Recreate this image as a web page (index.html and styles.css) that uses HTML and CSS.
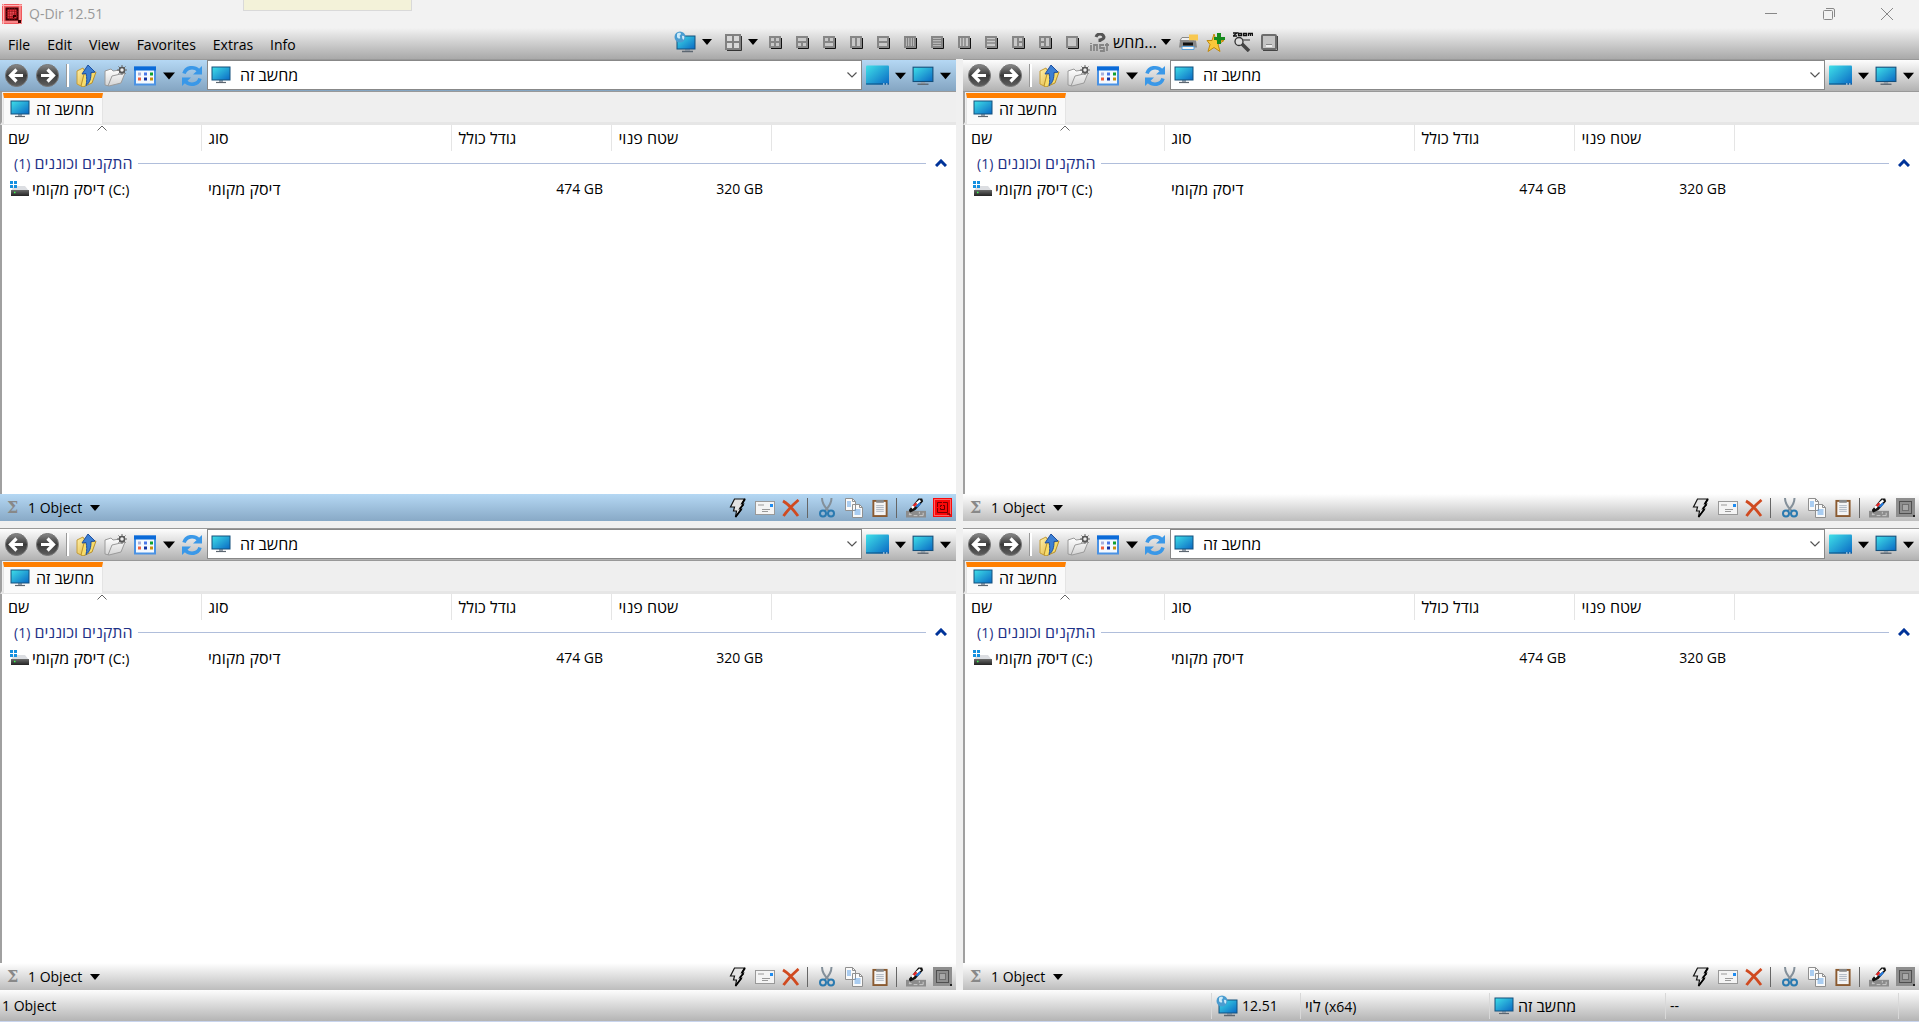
FILE: index.html
```html
<!DOCTYPE html>
<html lang="en">
<head>
<meta charset="utf-8">
<title>Q-Dir 12.51</title>
<link rel="stylesheet" href="styles.css">
</head>
<body>
<svg class="sprite" aria-hidden="true">
  <defs>
    <linearGradient id="screen" x1="0" y1="0" x2="1" y2="1"><stop offset="0" stop-color="#3fe0e8"/><stop offset="1" stop-color="#0a68c4"/></linearGradient>
    <linearGradient id="ball" x1="0" y1="0" x2="0" y2="1"><stop offset="0" stop-color="#8a8a8a"/><stop offset=".5" stop-color="#3a3a3a"/><stop offset="1" stop-color="#606060"/></linearGradient>
    <linearGradient id="gold" x1="0" y1="0" x2="1" y2="1"><stop offset="0" stop-color="#fff3b0"/><stop offset="1" stop-color="#e0b030"/></linearGradient>
    <linearGradient id="paper" x1="0" y1="0" x2="0" y2="1"><stop offset="0" stop-color="#fff"/><stop offset="1" stop-color="#d4d4d4"/></linearGradient>
    <linearGradient id="disk" x1="0" y1="0" x2="0" y2="1"><stop offset="0" stop-color="#6a6a6a"/><stop offset="1" stop-color="#222"/></linearGradient>
  </defs>
  <symbol id="i-app" viewBox="0 0 20 20"><rect width="20" height="20" rx="1" fill="#f0585c"/><path d="M0 1.500h20M0 18h20M1.500 0v20M18 0v20" stroke="#ffb4b4"/><path d="M4.500 4.500h11v11h-11z" fill="#e83038" stroke="#3a0004" stroke-width="2"/><path d="M7 7h5v5H7z" fill="#f05058"/><path d="M7.500 4v12M10 4v12M12.500 4v12M4 7.500h12M4 10h12M4 12.500h12" stroke="#8a1018" stroke-width=".6"/><path d="M11 11h3v2h-2v1h-1zM16 16h3v3h-3z" fill="#300"/></symbol>
  <symbol id="i-back" viewBox="0 0 23 23"><circle cx="11.500" cy="11.500" r="11" fill="url(#ball)" stroke="#777"/><path d="M11.500 5.500l-6 6 6 6M6 11.500h12" fill="none" stroke="#fff" stroke-width="3.200"/></symbol>
  <symbol id="i-fwd" viewBox="0 0 23 23"><circle cx="11.500" cy="11.500" r="11" fill="url(#ball)" stroke="#777"/><path d="M11.500 5.500l6 6-6 6M17 11.500H5" fill="none" stroke="#fff" stroke-width="3.200"/></symbol>
  <symbol id="i-up" viewBox="0 0 22 22"><path d="M1 6l6-3 1 2 5-1v13l-8 4-4-2z" fill="url(#gold)" stroke="#c49c38"/><path d="M5 21L8 9l12-2-4 11-9 4z" fill="#f7dc6a" stroke="#b8902c"/><path d="M12 0l7 7-4 .500c0 6-1 10-5 13 1-4 1-8 0-12l-4 .500z" fill="#3c7fd4" stroke="#1d4fa0"/></symbol>
  <symbol id="i-new" viewBox="0 0 24 22"><path d="M1 6l6-2 2 2 7-1v4l5-1-4 10-12 3-4-1z" fill="url(#paper)" stroke="#9a9a9a"/><path d="M4 21l4-10 13-3" fill="none" stroke="#999"/><circle cx="18" cy="5" r="2.500" fill="#eee" stroke="#555" stroke-width="1.500"/><path d="M18 0v2M18 8v2M13 5h2M21 5h2M14.500 1.500l1.500 1.500M21.500 1.500L20 3M14.500 8.500L16 7M21.500 8.500L20 7" stroke="#666"/></symbol>
  <symbol id="i-view" viewBox="0 0 22 19"><rect x="1" y="1" width="20" height="17" fill="#f4f9ff" stroke="#4a92e4" stroke-width="2"/><path d="M0 0h22v4H0z" fill="#0a6ad8"/><path d="M4 6h3v3H4z" fill="#a8b0dc"/><path d="M4 11h3v3H4z" fill="#f06040"/><path d="M10 6h3v3h-3z" fill="#4a78e8"/><path d="M16 6h3v3h-3z" fill="#10a030"/><path d="M10 11h3v3h-3z" fill="#1030a0"/><path d="M16 11h3v3h-3z" fill="#c89010"/></symbol>
  <symbol id="i-refresh" viewBox="0 0 22 22"><path d="M3 8.500C5 2 13 1 17.500 5.500M19 13.500C17 20 9 21 4.500 16.500" fill="none" stroke="#3a98e8" stroke-width="3.600"/><path d="M21 1v8.500h-9zM1 21v-8.500h9z" fill="#3a98e8"/></symbol>
  <symbol id="i-pc" viewBox="0 0 20 18"><path d="M8 14h4v3H8z" fill="#9aa4ae"/><path d="M5 16.500h10" stroke="#5c6670" stroke-width="1.200"/><rect x="1" y="1" width="18" height="13" fill="url(#screen)" stroke="#14507c"/></symbol>
  <symbol id="i-pane" viewBox="0 0 23 20"><rect width="23" height="19" rx="1" fill="url(#screen)"/><path d="M0 18.500h23" stroke="#0a4c80"/><path d="M17 18.500h1.500M20 18.500h1.500" stroke="#fff"/></symbol>
  <symbol id="i-net" viewBox="0 0 22 22"><path d="M11 17h5v3h-5z" fill="#9aa4ae"/><path d="M8 20.500h11" stroke="#5c6670" stroke-width="1.500"/><rect x="3" y="5" width="18" height="13" fill="url(#screen)" stroke="#14507c"/><circle cx="6" cy="6" r="5.500" fill="#4a9cd0"/><path d="M3 3c2-2 4-1 4 0s-2 1-1 3-2 2-3 0zM8 5c2-1 3 1 2 3s-2-1-2-3z" fill="#cdeaf8"/></symbol>
  <symbol id="i-drive" viewBox="0 0 20 16"><path d="M4 5h11l4 5H1z" fill="#dcdee2"/><rect x="1" y="9" width="18" height="6" fill="url(#disk)"/><path d="M4 11.500h1.500" stroke="#3cff50" stroke-width="1.500"/><path d="M0 0h3v3H0zM4 0h3v3H4zM0 4h3v3H0zM4 4h3v3H4z" fill="#1590e0"/></symbol>
  <symbol id="i-down" viewBox="0 0 10 6"><path d="M0 0h10L5 6z" fill="#000"/></symbol>
  <symbol id="i-chev" viewBox="0 0 10 6"><path d="M.5.5L5 5 9.500.5" fill="none" stroke="#555" stroke-width="1.200"/></symbol>
  <symbol id="i-sort" viewBox="0 0 10 6"><path d="M.5 5.500L5 1l4.500 4.500" fill="none" stroke="#666"/></symbol>
  <symbol id="i-fold" viewBox="0 0 12 8"><path d="M1 7l5-5 5 5" fill="none" stroke="#003399" stroke-width="3"/></symbol>
  <symbol id="i-bolt" viewBox="0 0 17 20"><path d="M5 1h10l-3 5h2l-4 5h2l-6 8 1-6H4l1-4H1z" fill="#e4e4e4" stroke="#111" stroke-width="1.200"/><path d="M15.500 1l-3 5M14 6.500l-3.500 4M12 11l-6 8" stroke="#000" stroke-width="1.800"/></symbol>
  <symbol id="i-mail" viewBox="0 0 20 14"><rect x=".5" y=".5" width="19" height="13" fill="#f4f4f4" stroke="#999"/><path d="M3 4h6M7 8.500h8M7 10.500h6" stroke="#999"/><path d="M15 3h3v3h-3z" fill="#1f8cf0"/></symbol>
  <symbol id="i-del" viewBox="0 0 18 18"><path d="M1 2Q8 6 16 17M16.500 1Q8 8 1.500 17" fill="none" stroke="#d04a20" stroke-width="2.800"/></symbol>
  <symbol id="i-cut" viewBox="0 0 16 20"><path d="M3 0q0 7 7 13M12.500 0q0 7-7 13" fill="none" stroke="#84909a" stroke-width="2"/><circle cx="4" cy="15.500" r="3" fill="none" stroke="#2a7ab0" stroke-width="2"/><circle cx="12" cy="15.500" r="3" fill="none" stroke="#2a7ab0" stroke-width="2"/></symbol>
  <symbol id="i-copy" viewBox="0 0 18 20"><path d="M.5.5h7l3 3v9H.5zM7.500 6.500h7l3 3v10h-10z" fill="#fafafa" stroke="#909090"/><path d="M7.500.5v3h3M14.500 6.500v3h3" fill="none" stroke="#909090"/><path d="M2 4h4M2 6h4M2 8h4M9.500 12h6M9.500 14h6M9.500 16h6" stroke="#5aa0e8"/></symbol>
  <symbol id="i-paste" viewBox="0 0 16 19"><rect x="1" y="2" width="14" height="16" fill="#f4f4f4" stroke="#8a5a30" stroke-width="2"/><path d="M4 1h8v3H4z" fill="#888"/><path d="M4 7h8M4 9h8M4 11h8M4 13h8" stroke="#aab4c0"/></symbol>
  <symbol id="i-pen" viewBox="0 0 21 20"><path d="M0 13h21v7H0z" fill="#8c8c8c"/><path d="M4 14v3M3 17h3M8 18h4M14 14v2M14 18h4M18 15v3" stroke="#ccc"/><path d="M3 12L13 0h4l1 3-8 9-6 3z" fill="#111"/><path d="M6 10l9-8" stroke="#fff" stroke-width="2.500"/><path d="M8 8l3-3" stroke="#e02020" stroke-width="2.500"/><path d="M11 9l4-4" stroke="#1f78e0" stroke-width="2"/></symbol>
  <symbol id="i-markred" viewBox="0 0 19 19"><rect width="19" height="19" fill="#fa0808"/><path d="M1.500 1.500h16v16h-16z" fill="none" stroke="#ffc0c0" stroke-dasharray="1 1"/><path d="M4.500 4.500h10v10h-10z" fill="none" stroke="#700" /><path d="M7.500 7.500h4v4h-4z" fill="none" stroke="#600"/><path d="M9.500 4v11M4 9.500h11" stroke="#fa0808" stroke-dasharray="1 2"/><path d="M14 16h3v2" fill="none" stroke="#500"/></symbol>
  <symbol id="i-mark" viewBox="0 0 19 19"><rect width="19" height="19" fill="#8e8e8e"/><path d="M3.500 3.500h12v12h-12z" fill="none" stroke="#111" stroke-dasharray="1 1"/><path d="M6.500 6.500h6v6h-6z" fill="#a8a8a8" stroke="#444" stroke-dasharray="1 1"/><path d="M17 17h2v2h-2z" fill="#222"/></symbol>
  <symbol id="i-f" viewBox="0 0 13 13"><path d="M2 12.500h10.500V2" fill="none" stroke="#111"/><rect x="1" y="1" width="10" height="10" fill="#c8c8c8" stroke="#868686" stroke-width="2"/></symbol>
  <symbol id="i-ask" viewBox="0 0 19 19"><path d="M6 4q1-3 4-3t4 3q0 2-4 3v2" fill="none" stroke="#555" stroke-width="3"/><path d="M1 10v1M1 12v6M4 18v-6h3v6M14 12h-4v3h4v3h-4M17 10v8M15 12h4" fill="none" stroke="#858585" stroke-width="1.800"/></symbol>
  <symbol id="i-print" viewBox="0 0 19 16"><path d="M3 3h10l2 3H1z" fill="#eee" stroke="#888"/><path d="M10 0h9v6h-9z" fill="#f8c850"/><path d="M1 6h16l1 7H0z" fill="#888"/><path d="M4 8h10v3H4z" fill="#111"/><path d="M3 12h12v3H3z" fill="#f4f4f4" stroke="#5aa0d8"/></symbol>
  <symbol id="i-star" viewBox="0 0 19 19"><path d="M8 1l2 6 8 .500-6 4 2 7-6-4-6 4 2-7-3-4h5z" fill="#fbc83a" stroke="#c08a10"/><path d="M11 0h4v4h4v3h-4v4h-4V7H8V4h3z" fill="#158a1c"/></symbol>
  <symbol id="i-zoom" viewBox="0 0 20 20"><path d="M0 1h4L0 4h4M5.500 1.500h3v2h-3zM10.500 1.500h3v2h-3zM15.500 4V1.500h4V4M17.500 2v2" fill="none" stroke="#111" stroke-width="1.300"/><circle cx="6" cy="9.500" r="4" fill="#ddd" stroke="#333" stroke-width="1.300"/><path d="M9 12l7 7" stroke="#444" stroke-width="3.500"/><path d="M10 8h7" stroke="#666" stroke-width="1.500"/></symbol>
  <symbol id="i-tray" viewBox="0 0 17 17"><path d="M2 16.500h14.500V2" fill="none" stroke="#444"/><rect x="1" y="1" width="14" height="14" rx="1" fill="#c4c4c4" stroke="#6c6c6c" stroke-width="2"/><path d="M5 12h6" stroke="#eee" stroke-width="2"/><path d="M5 10.500h6" stroke="#888"/></symbol>
</svg>

<header class="titlebar">
  <svg class="s20"><use href="#i-app"/></svg>
  <h1>Q-Dir 12.51</h1>
  <div class="flag"></div>
  <div class="winbtns">
    <button aria-label="Minimize"><svg class="s12" viewBox="0 0 12 12"><path d="M0 5.500h12" stroke="#888"/></svg></button>
    <button aria-label="Restore"><svg class="s12" viewBox="0 0 12 12"><rect x=".5" y="2.500" width="9" height="9" rx="1" fill="none" stroke="#888"/><path d="M3 .5h7q1.500 0 1.500 1.500v7" fill="none" stroke="#888"/></svg></button>
    <button aria-label="Close"><svg class="s12" viewBox="0 0 12 12"><path d="M0 0l12 12M12 0L0 12" stroke="#888"/></svg></button>
  </div>
</header>

<nav class="menubar">
  <div class="menus"><button>File</button><button>Edit</button><button>View</button><button>Favorites</button><button>Extras</button><button>Info</button></div>
  <div class="tools">
    <button aria-label="Computer"><svg class="s22"><use href="#i-net"/></svg><svg class="arr"><use href="#i-down"/></svg></button>
    <button class="layout" aria-label="Layout"><svg class="s17" viewBox="0 0 17 17"><path d="M2 16.500h14.500V2" fill="none" stroke="#333"/><path d="M1 1h14v14H1zM8 1v14M1 8h14" fill="#d8d8d8" stroke="#808080" stroke-width="2"/></svg><svg class="arr"><use href="#i-down"/></svg></button>
    <div class="frames">
      <button aria-label="Four panes"><svg class="s13" viewBox="0 0 13 13"><use href="#i-f"/><path d="M6 1v10M1 6h10" stroke="#868686" stroke-width="2"/></svg></button>
      <button aria-label="One over two"><svg class="s13" viewBox="0 0 13 13"><use href="#i-f"/><path d="M6 6v5M1 6h10" stroke="#868686" stroke-width="2"/></svg></button>
      <button aria-label="Two over one"><svg class="s13" viewBox="0 0 13 13"><use href="#i-f"/><path d="M6 1v5M1 6h10" stroke="#868686" stroke-width="2"/></svg></button>
      <button aria-label="Two columns"><svg class="s13" viewBox="0 0 13 13"><use href="#i-f"/><path d="M6 1v10" stroke="#868686" stroke-width="2"/></svg></button>
      <button aria-label="Two rows"><svg class="s13" viewBox="0 0 13 13"><use href="#i-f"/><path d="M1 6h10" stroke="#868686" stroke-width="2"/></svg></button>
      <button aria-label="Four columns"><svg class="s13" viewBox="0 0 13 13"><use href="#i-f"/><path d="M3.500 1v10M6 1v10M8.500 1v10" stroke="#808080" stroke-width="1.500"/></svg></button>
      <button aria-label="Four rows"><svg class="s13" viewBox="0 0 13 13"><use href="#i-f"/><path d="M1 3.500h10M1 6h10M1 8.500h10" stroke="#808080" stroke-width="1.500"/></svg></button>
      <button aria-label="Three columns"><svg class="s13" viewBox="0 0 13 13"><use href="#i-f"/><path d="M4 1v10M7 1v10" stroke="#868686" stroke-width="1.500"/></svg></button>
      <button aria-label="Three rows"><svg class="s13" viewBox="0 0 13 13"><use href="#i-f"/><path d="M1 4h10M1 7h10" stroke="#868686" stroke-width="1.500"/></svg></button>
      <button aria-label="One beside two"><svg class="s13" viewBox="0 0 13 13"><use href="#i-f"/><path d="M6 1v10M6 6h5" stroke="#868686" stroke-width="2"/></svg></button>
      <button aria-label="Two beside one"><svg class="s13" viewBox="0 0 13 13"><use href="#i-f"/><path d="M6 1v10M1 6h5" stroke="#868686" stroke-width="2"/></svg></button>
      <button aria-label="One pane"><svg class="s13" viewBox="0 0 13 13"><use href="#i-f"/></svg></button>
    </div>
    <button class="quick"><svg class="s19"><use href="#i-ask"/></svg><span lang="he">מחש...</span><svg class="arr"><use href="#i-down"/></svg></button>
    <div class="extras">
      <button aria-label="Print"><svg class="s19"><use href="#i-print"/></svg></button>
      <button aria-label="Add favorite"><svg class="s19"><use href="#i-star"/></svg></button>
      <button aria-label="Magnifier"><svg class="s20"><use href="#i-zoom"/></svg></button>
      <button aria-label="To tray"><svg class="s17"><use href="#i-tray"/></svg></button>
    </div>
  </div>
</nav>

<main class="panes">
  <section class="pane active">
    <div class="toolbar">
      <button class="round" aria-label="Back"><svg class="s23"><use href="#i-back"/></svg></button><button class="round" aria-label="Forward"><svg class="s23"><use href="#i-fwd"/></svg></button><span class="sep"></span>
      <div class="actions"><button aria-label="Up"><svg class="s22"><use href="#i-up"/></svg></button><button aria-label="New folder"><svg class="s24"><use href="#i-new"/></svg></button><button class="drop" aria-label="View"><svg class="s22"><use href="#i-view"/></svg><svg class="big"><use href="#i-down"/></svg></button><button aria-label="Refresh"><svg class="s22"><use href="#i-refresh"/></svg></button></div>
      <div class="address"><svg class="s20"><use href="#i-pc"/></svg><input type="text" lang="he" aria-label="Address" value="מחשב זה"><button aria-label="History"><svg class="arr"><use href="#i-chev"/></svg></button></div>
      <div class="places"><button class="drop" aria-label="Desktop"><svg class="s23"><use href="#i-pane"/></svg><svg class="big"><use href="#i-down"/></svg></button><button class="drop" aria-label="Computer"><svg class="s22"><use href="#i-pc"/></svg><svg class="big"><use href="#i-down"/></svg></button></div>
    </div>
    <div class="tabs"><button class="tab" lang="he"><svg class="s20"><use href="#i-pc"/></svg>מחשב זה</button></div>
    <div class="list">
      <table>
        <thead><tr lang="he"><th class="c1">שם<svg class="sort"><use href="#i-sort"/></svg></th><th class="c2">סוג</th><th class="c3">גודל כולל</th><th class="c3">שטח פנוי</th><td></td></tr></thead>
        <tbody>
          <tr><th class="group" colspan="5"><div><span dir="rtl" lang="he">התקנים וכוננים <small>(1)</small></span><i></i><button aria-label="Collapse"><svg class="fold"><use href="#i-fold"/></svg></button></div></th></tr>
          <tr class="file"><td><div><svg class="drive"><use href="#i-drive"/></svg><span lang="he">דיסק מקומי <small>(C:)</small></span></div></td><td lang="he">דיסק מקומי</td><td class="num">474 GB</td><td class="num">320 GB</td><td></td></tr>
        </tbody>
      </table>
    </div>
    <footer class="info">
      <span class="sum">Σ</span><button class="count">1 Object<svg class="arr"><use href="#i-down"/></svg></button>
      <div class="ops"><button aria-label="Quick"><svg class="s20"><use href="#i-bolt"/></svg></button><button aria-label="Mail"><svg class="s20"><use href="#i-mail"/></svg></button><button aria-label="Delete"><svg class="s18"><use href="#i-del"/></svg></button></div>
      <div class="ops"><button aria-label="Cut"><svg class="s20"><use href="#i-cut"/></svg></button><button aria-label="Copy"><svg class="s20"><use href="#i-copy"/></svg></button><button aria-label="Paste"><svg class="s18"><use href="#i-paste"/></svg></button></div>
      <div class="ops"><button aria-label="Colors"><svg class="s20"><use href="#i-pen"/></svg></button><button aria-label="Active pane"><svg class="s19"><use href="#i-markred"/></svg></button></div>
    </footer>
  </section>

  <section class="pane">
    <div class="toolbar">
      <button class="round" aria-label="Back"><svg class="s23"><use href="#i-back"/></svg></button><button class="round" aria-label="Forward"><svg class="s23"><use href="#i-fwd"/></svg></button><span class="sep"></span>
      <div class="actions"><button aria-label="Up"><svg class="s22"><use href="#i-up"/></svg></button><button aria-label="New folder"><svg class="s24"><use href="#i-new"/></svg></button><button class="drop" aria-label="View"><svg class="s22"><use href="#i-view"/></svg><svg class="big"><use href="#i-down"/></svg></button><button aria-label="Refresh"><svg class="s22"><use href="#i-refresh"/></svg></button></div>
      <div class="address"><svg class="s20"><use href="#i-pc"/></svg><input type="text" lang="he" aria-label="Address" value="מחשב זה"><button aria-label="History"><svg class="arr"><use href="#i-chev"/></svg></button></div>
      <div class="places"><button class="drop" aria-label="Desktop"><svg class="s23"><use href="#i-pane"/></svg><svg class="big"><use href="#i-down"/></svg></button><button class="drop" aria-label="Computer"><svg class="s22"><use href="#i-pc"/></svg><svg class="big"><use href="#i-down"/></svg></button></div>
    </div>
    <div class="tabs"><button class="tab" lang="he"><svg class="s20"><use href="#i-pc"/></svg>מחשב זה</button></div>
    <div class="list">
      <table>
        <thead><tr lang="he"><th class="c1">שם<svg class="sort"><use href="#i-sort"/></svg></th><th class="c2">סוג</th><th class="c3">גודל כולל</th><th class="c3">שטח פנוי</th><td></td></tr></thead>
        <tbody>
          <tr><th class="group" colspan="5"><div><span dir="rtl" lang="he">התקנים וכוננים <small>(1)</small></span><i></i><button aria-label="Collapse"><svg class="fold"><use href="#i-fold"/></svg></button></div></th></tr>
          <tr class="file"><td><div><svg class="drive"><use href="#i-drive"/></svg><span lang="he">דיסק מקומי <small>(C:)</small></span></div></td><td lang="he">דיסק מקומי</td><td class="num">474 GB</td><td class="num">320 GB</td><td></td></tr>
        </tbody>
      </table>
    </div>
    <footer class="info">
      <span class="sum">Σ</span><button class="count">1 Object<svg class="arr"><use href="#i-down"/></svg></button>
      <div class="ops"><button aria-label="Quick"><svg class="s20"><use href="#i-bolt"/></svg></button><button aria-label="Mail"><svg class="s20"><use href="#i-mail"/></svg></button><button aria-label="Delete"><svg class="s18"><use href="#i-del"/></svg></button></div>
      <div class="ops"><button aria-label="Cut"><svg class="s20"><use href="#i-cut"/></svg></button><button aria-label="Copy"><svg class="s20"><use href="#i-copy"/></svg></button><button aria-label="Paste"><svg class="s18"><use href="#i-paste"/></svg></button></div>
      <div class="ops"><button aria-label="Colors"><svg class="s20"><use href="#i-pen"/></svg></button><button aria-label="Active pane"><svg class="s19"><use href="#i-mark"/></svg></button></div>
    </footer>
  </section>

  <section class="pane">
    <div class="toolbar">
      <button class="round" aria-label="Back"><svg class="s23"><use href="#i-back"/></svg></button><button class="round" aria-label="Forward"><svg class="s23"><use href="#i-fwd"/></svg></button><span class="sep"></span>
      <div class="actions"><button aria-label="Up"><svg class="s22"><use href="#i-up"/></svg></button><button aria-label="New folder"><svg class="s24"><use href="#i-new"/></svg></button><button class="drop" aria-label="View"><svg class="s22"><use href="#i-view"/></svg><svg class="big"><use href="#i-down"/></svg></button><button aria-label="Refresh"><svg class="s22"><use href="#i-refresh"/></svg></button></div>
      <div class="address"><svg class="s20"><use href="#i-pc"/></svg><input type="text" lang="he" aria-label="Address" value="מחשב זה"><button aria-label="History"><svg class="arr"><use href="#i-chev"/></svg></button></div>
      <div class="places"><button class="drop" aria-label="Desktop"><svg class="s23"><use href="#i-pane"/></svg><svg class="big"><use href="#i-down"/></svg></button><button class="drop" aria-label="Computer"><svg class="s22"><use href="#i-pc"/></svg><svg class="big"><use href="#i-down"/></svg></button></div>
    </div>
    <div class="tabs"><button class="tab" lang="he"><svg class="s20"><use href="#i-pc"/></svg>מחשב זה</button></div>
    <div class="list">
      <table>
        <thead><tr lang="he"><th class="c1">שם<svg class="sort"><use href="#i-sort"/></svg></th><th class="c2">סוג</th><th class="c3">גודל כולל</th><th class="c3">שטח פנוי</th><td></td></tr></thead>
        <tbody>
          <tr><th class="group" colspan="5"><div><span dir="rtl" lang="he">התקנים וכוננים <small>(1)</small></span><i></i><button aria-label="Collapse"><svg class="fold"><use href="#i-fold"/></svg></button></div></th></tr>
          <tr class="file"><td><div><svg class="drive"><use href="#i-drive"/></svg><span lang="he">דיסק מקומי <small>(C:)</small></span></div></td><td lang="he">דיסק מקומי</td><td class="num">474 GB</td><td class="num">320 GB</td><td></td></tr>
        </tbody>
      </table>
    </div>
    <footer class="info">
      <span class="sum">Σ</span><button class="count">1 Object<svg class="arr"><use href="#i-down"/></svg></button>
      <div class="ops"><button aria-label="Quick"><svg class="s20"><use href="#i-bolt"/></svg></button><button aria-label="Mail"><svg class="s20"><use href="#i-mail"/></svg></button><button aria-label="Delete"><svg class="s18"><use href="#i-del"/></svg></button></div>
      <div class="ops"><button aria-label="Cut"><svg class="s20"><use href="#i-cut"/></svg></button><button aria-label="Copy"><svg class="s20"><use href="#i-copy"/></svg></button><button aria-label="Paste"><svg class="s18"><use href="#i-paste"/></svg></button></div>
      <div class="ops"><button aria-label="Colors"><svg class="s20"><use href="#i-pen"/></svg></button><button aria-label="Active pane"><svg class="s19"><use href="#i-mark"/></svg></button></div>
    </footer>
  </section>

  <section class="pane">
    <div class="toolbar">
      <button class="round" aria-label="Back"><svg class="s23"><use href="#i-back"/></svg></button><button class="round" aria-label="Forward"><svg class="s23"><use href="#i-fwd"/></svg></button><span class="sep"></span>
      <div class="actions"><button aria-label="Up"><svg class="s22"><use href="#i-up"/></svg></button><button aria-label="New folder"><svg class="s24"><use href="#i-new"/></svg></button><button class="drop" aria-label="View"><svg class="s22"><use href="#i-view"/></svg><svg class="big"><use href="#i-down"/></svg></button><button aria-label="Refresh"><svg class="s22"><use href="#i-refresh"/></svg></button></div>
      <div class="address"><svg class="s20"><use href="#i-pc"/></svg><input type="text" lang="he" aria-label="Address" value="מחשב זה"><button aria-label="History"><svg class="arr"><use href="#i-chev"/></svg></button></div>
      <div class="places"><button class="drop" aria-label="Desktop"><svg class="s23"><use href="#i-pane"/></svg><svg class="big"><use href="#i-down"/></svg></button><button class="drop" aria-label="Computer"><svg class="s22"><use href="#i-pc"/></svg><svg class="big"><use href="#i-down"/></svg></button></div>
    </div>
    <div class="tabs"><button class="tab" lang="he"><svg class="s20"><use href="#i-pc"/></svg>מחשב זה</button></div>
    <div class="list">
      <table>
        <thead><tr lang="he"><th class="c1">שם<svg class="sort"><use href="#i-sort"/></svg></th><th class="c2">סוג</th><th class="c3">גודל כולל</th><th class="c3">שטח פנוי</th><td></td></tr></thead>
        <tbody>
          <tr><th class="group" colspan="5"><div><span dir="rtl" lang="he">התקנים וכוננים <small>(1)</small></span><i></i><button aria-label="Collapse"><svg class="fold"><use href="#i-fold"/></svg></button></div></th></tr>
          <tr class="file"><td><div><svg class="drive"><use href="#i-drive"/></svg><span lang="he">דיסק מקומי <small>(C:)</small></span></div></td><td lang="he">דיסק מקומי</td><td class="num">474 GB</td><td class="num">320 GB</td><td></td></tr>
        </tbody>
      </table>
    </div>
    <footer class="info">
      <span class="sum">Σ</span><button class="count">1 Object<svg class="arr"><use href="#i-down"/></svg></button>
      <div class="ops"><button aria-label="Quick"><svg class="s20"><use href="#i-bolt"/></svg></button><button aria-label="Mail"><svg class="s20"><use href="#i-mail"/></svg></button><button aria-label="Delete"><svg class="s18"><use href="#i-del"/></svg></button></div>
      <div class="ops"><button aria-label="Cut"><svg class="s20"><use href="#i-cut"/></svg></button><button aria-label="Copy"><svg class="s20"><use href="#i-copy"/></svg></button><button aria-label="Paste"><svg class="s18"><use href="#i-paste"/></svg></button></div>
      <div class="ops"><button aria-label="Colors"><svg class="s20"><use href="#i-pen"/></svg></button><button aria-label="Active pane"><svg class="s19"><use href="#i-mark"/></svg></button></div>
    </footer>
  </section>
</main>

<footer class="statusbar">
  <div>1 Object</div>
  <div><svg class="s22"><use href="#i-net"/></svg>12.51</div>
  <div><span lang="he">לוי <small>(x64)</small></span></div>
  <div lang="he"><svg class="s20"><use href="#i-pc"/></svg>מחשב זה</div>
  <div>--</div>
  <div></div>
</footer>
</body>
</html>
```
FILE: styles.css
```css
* { box-sizing: border-box; }
html, body { height: 100%; margin: 0; }
body { display: flex; flex-direction: column; background: #f0f0f0; color: #000; font: 14px/20px "Open Sans", "Noto Sans", "Liberation Sans", sans-serif; }
button, input { font: inherit; color: inherit; border: 0; padding: 0; margin: 0; background: none; }
button { display: flex; align-items: center; white-space: nowrap; }
[lang="he"] { font-size: 16px; }
small { font-size: 14px; }
svg { display: block; flex: none; }
.sprite { position: absolute; width: 0; height: 0; }
.s12 { width: 12px; height: 12px; }
.s13 { width: 13px; height: 13px; }
.s17 { width: 17px; height: 17px; }
.s18 { width: 18px; height: 18px; }
.s19 { width: 19px; height: 19px; }
.s20 { width: 20px; height: 20px; }
.s22 { width: 22px; height: 22px; }
.s23 { width: 23px; height: 23px; }
.s24 { width: 24px; height: 22px; }
.arr { width: 10px; height: 6px; }
.big { width: 12px; height: 8px; }
.drive { width: 20px; height: 16px; }

.titlebar { position: relative; display: flex; align-items: center; height: 28px; padding-left: 2px; background: #f2f2f2; }
.titlebar h1 { flex: 1; margin: 0 0 0 7px; font-size: 14px; font-weight: 400; color: #999; }
.flag { position: absolute; left: 243px; top: 0; width: 169px; height: 11px; background: #f3f2d9; border: 1px solid #d9d9d9; border-top: 0; }
.winbtns { display: flex; padding-right: 3px; }
.winbtns button { width: 58px; height: 28px; justify-content: center; }

.menubar { display: grid; grid-template-columns: 674px 1fr; height: 31px; background: linear-gradient(#f2f2f2, #a9a9a9); }
.menus { display: flex; align-items: center; gap: 17px; padding: 2px 0 0 8px; }
.tools { display: flex; align-items: center; height: 28px; }
.tools button { gap: 6px; }
.layout { margin-left: 13px; }
.frames { display: flex; gap: 14px; margin: 0 11px; }
.quick span { width: 44px; }
.tools .quick { gap: 4px; }
.extras { display: flex; align-items: center; gap: 8px; margin-left: 8px; }

.panes { flex: 1; min-height: 0; display: grid; grid-template: 1fr 1fr / 1fr 1fr; gap: 7px; }
.pane { display: flex; flex-direction: column; min-width: 0; background: #fff; border-top: 1px solid #999; }
.toolbar { display: flex; align-items: center; height: 32px; padding-left: 5px; background: linear-gradient(#fdfdfd, #b2b2b2); border-bottom: 1px solid #999; }
.active .toolbar { background: linear-gradient(#b5d8f4, #84a5c2); }
.round { margin-right: 8px; }
.sep { width: 3px; height: 23px; margin-right: 7px; margin-left: -1px; background: #fff; border-left: 1px solid #999; }
.actions { display: flex; gap: 6px; padding-right: 4px; }
.drop { gap: 7px; }
.address { flex: 1; display: flex; align-items: center; align-self: flex-start; height: 30px; padding-left: 3px; background: #fff; border: 1px solid #888; }
.address input { flex: 1; min-width: 0; margin-left: 9px; height: 20px; }
.address button { padding: 8px 4px; }
.places { display: flex; gap: 6px; padding: 0 5px 0 4px; }
.places .drop { gap: 6px; }
.places .big { width: 11px; }

.tabs { height: 33px; padding: 1px 0 0 1px; background: #efefef; border-left: 2px solid #a0a0a0; border-bottom: 3px solid #e6e6e6; }
.tab { width: 100px; height: 31px; padding: 0 0 5px 6px; gap: 6px; background: #fafafa; border: 1px solid #e4e4e4; border-top: 5px solid #ff7f00; border-bottom: 0; }
.list { flex: 1; min-height: 0; background: #fff; border-left: 2px solid #a0a0a0; }
table { width: 100%; table-layout: fixed; border-collapse: collapse; }
th, td { padding: 0 8px 0 7px; font-weight: 400; text-align: left; white-space: nowrap; }
th:first-child, td:first-child { padding-left: 6px; }
thead th { position: relative; height: 26px; border-right: 1px solid #e5e5e5; }
.c1 { width: 199px; }
.c2 { width: 250px; }
.c3 { width: 160px; }
.sort { position: absolute; left: 95px; top: 0; width: 10px; height: 6px; }
.group { height: 24px; }
.group div { display: flex; align-items: center; gap: 5px; margin: 0 1px 0 6px; color: #1e3287; }
.group i { flex: 1; height: 1px; margin-right: 4px; background: #b0bedb; }
.fold { width: 12px; height: 8px; }
.file td { height: 28px; }
.file td div { display: flex; align-items: center; gap: 2px; margin-left: 2px; }
.file .num { text-align: right; }

.info { display: flex; align-items: center; height: 27px; padding: 0 4px 0 7px; background: linear-gradient(#fff, #bdbdbd); }
.active .info { background: linear-gradient(#b5d8f4, #88a9c6); }
.sum { width: 21px; color: #888; font: bold 16px/20px "DejaVu Serif", serif; }
.count { gap: 8px; margin-right: auto; }
.ops { display: flex; align-items: center; gap: 7px; }
.ops + .ops { margin-left: 7px; padding-left: 9px; border-left: 1px solid #666; }

.statusbar { display: grid; grid-template-columns: 1fr 89px 189px 176px 233px 21px; align-items: center; height: 32px; padding: 3px 0; background: linear-gradient(#fdfdfd, #b4b4b4); border-bottom: 1px solid #c9d5ee; }
.statusbar div { display: flex; align-items: center; gap: 4px; height: 26px; padding-left: 4px; border-left: 1px solid #d8d8d8; white-space: nowrap; }
.statusbar div:first-child { padding-left: 1px; border-left-color: transparent; }
```
